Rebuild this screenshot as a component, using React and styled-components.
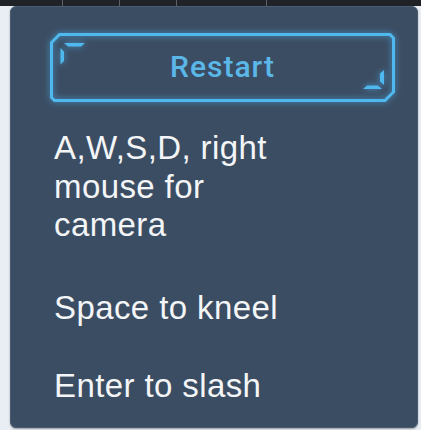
import React from 'react'
import styled, { createGlobalStyle } from 'styled-components'

const accent = '#4fb8ef'

const GlobalStyle = createGlobalStyle`
  body {
    margin: 0;
    background: #e9eef4;
    font-family: "Liberation Sans", Arial, sans-serif;
  }
`
const Page = styled.div`
  width: 421px;
  height: 430px;
  overflow: hidden;
`
const TopStrip = styled.div`
  display: flex;
  height: 6px;
  background: #1f2327;
`
const StripCell = styled.div`
  width: ${p => p.w}px;
  border-right: 1px solid #5b6068;
  box-sizing: border-box;
`
const Panel = styled.section`
  box-sizing: border-box;
  width: 408px;
  height: 422px;
  margin-left: 10px;
  padding: 26px 0 0 39px;
  background: #3b4d63;
  border: 1px solid #4a5c72;
  border-radius: 6px;
  box-shadow: 0 1px 2px rgba(0, 0, 0, .35);
`
const RestartButton = styled.button`
  position: relative;
  display: flex;
  align-items: center;
  justify-content: center;
  width: 345px;
  height: 69px;
  padding: 0 0 3px;
  margin: 0;
  border: none;
  background: transparent;
  color: #5bb7e8;
  font-family: Roboto, "Liberation Sans", sans-serif;
  font-size: 30px;
  font-weight: 500;
  letter-spacing: 1px;
  cursor: pointer;
`
const Frame = styled.svg`
  position: absolute;
  inset: 0;
  overflow: visible;
  filter: drop-shadow(0 0 3px rgba(79, 190, 255, .7));
  pointer-events: none;
`
const Hint = styled.p`
  width: 258px;
  margin: ${p => p.top}px 0 0 4px;
  color: #f3f5f7;
  font-size: 33px;
  letter-spacing: .4px;
  line-height: 38.5px;
`

const hints = [
  { text: 'A,W,S,D, right mouse for camera', top: 27 },
  { text: 'Space to kneel', top: 44 },
  { text: 'Enter to slash', top: 40 },
]

const ButtonFrame = () => (
  <Frame width="345" height="69" viewBox="0 0 345 69">
    <polygon
      points="9.5,1.5 340,1.5 343.5,5 343.5,59 335,67.5 4.5,67.5 1.5,64.5 1.5,9.5"
      fill="none"
      stroke={accent}
      strokeWidth="3"
    />
    <polygon points="14,10 35,10 31,13.5 18,13.5" fill={accent} />
    <polygon points="10.5,15 14,18.5 14,28 10.5,31.5" fill={accent} />
    <polygon points="334,37 334,52 330,48.5 330,40.5" fill={accent} />
    <polygon points="313,56 332,56 328,52.5 317,52.5" fill={accent} />
  </Frame>
)

const App = () => (
  <Page>
    <GlobalStyle />
    <TopStrip>
      <StripCell w={63} />
      <StripCell w={57} />
      <StripCell w={57} />
      <StripCell w={90} />
    </TopStrip>
    <Panel>
      <RestartButton>
        <ButtonFrame />
        Restart
      </RestartButton>
      {hints.map(h => (
        <Hint key={h.text} top={h.top}>{h.text}</Hint>
      ))}
    </Panel>
  </Page>
)

export default App
